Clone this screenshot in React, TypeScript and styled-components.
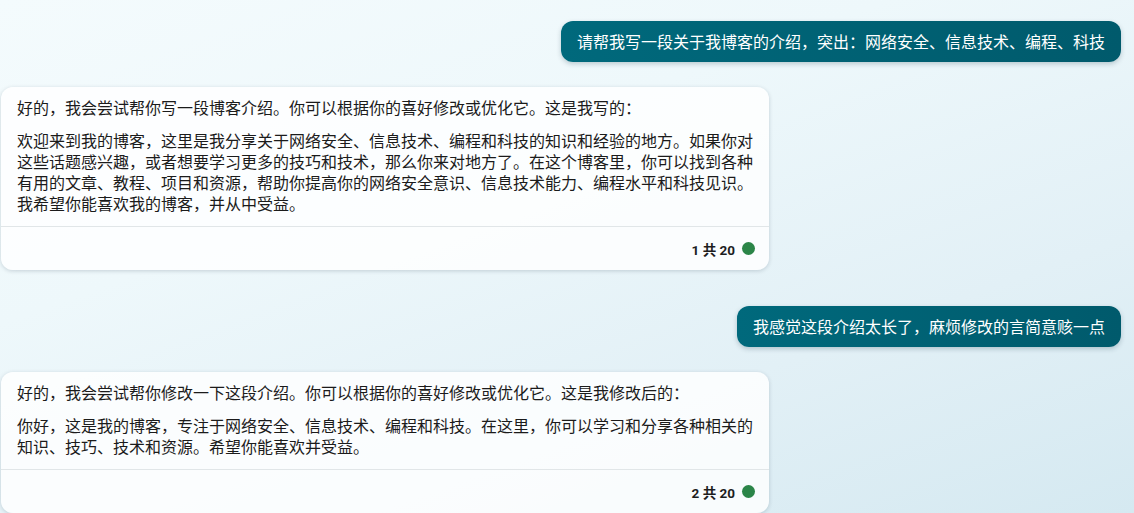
import React from "react";
import styled, { createGlobalStyle } from "styled-components";

const GlobalStyle = createGlobalStyle`
  html, body {
    margin: 0;
    padding: 0;
  }
  body {
    width: 1134px;
    height: 513px;
    overflow: hidden;
    font-family: "Noto Sans CJK SC", "Noto Sans", sans-serif;
    background: linear-gradient(160deg, #f4fbfd 0%, #eef8fb 35%, #e2f0f6 70%, #d5e9f1 100%);
  }
`;

const Thread = styled.main`
  display: flex;
  flex-direction: column;
  gap: 36px;
  padding: 21px 13px 0 1px;
  box-sizing: border-box;
  width: 1134px;
  height: 513px;
`;

const Exchange = styled.section`
  display: flex;
  flex-direction: column;
  gap: 25px;
`;

const UserBubble = styled.div`
  align-self: flex-end;
  padding: 10px 16px;
  border-radius: 12px;
  background: linear-gradient(90deg, #00697c 0%, #005a6c 100%);
  color: #ffffff;
  font-size: 16px;
  line-height: 21px;
  box-shadow: 0 2px 5px rgba(0, 40, 60, 0.22);
  white-space: nowrap;
`;

const BotCard = styled.article`
  align-self: flex-start;
  width: 768px;
  border-radius: 12px;
  background: rgba(255, 255, 255, 0.82);
  box-shadow: 0 1px 4px rgba(0, 30, 50, 0.18);
  color: #1b1b1b;
  overflow: hidden;
`;

const CardBody = styled.div`
  display: flex;
  flex-direction: column;
  gap: 12px;
  padding: 10px 16px 12px;
  font-size: 16px;
  line-height: 21px;
`;

const Para = styled.p`
  margin: 0;
`;

const CardFooter = styled.footer`
  display: flex;
  align-items: center;
  justify-content: flex-end;
  gap: 7px;
  height: 43px;
  padding: 0 14px;
  border-top: 1px solid #e1e6e8;
`;

const Counter = styled.span`
  font-family: Roboto, "Noto Sans CJK SC", sans-serif;
  font-weight: 700;
  font-size: 13.5px;
  color: #1e1e1e;
  padding-top: 1px;
`;

const StatusDot = styled.span`
  width: 13px;
  height: 13px;
  border-radius: 50%;
  background: #2b8548;
`;

type Msg = { user: string; intro: string; body: string; index: number };

const messages: Msg[] = [
  {
    user: "请帮我写一段关于我博客的介绍，突出：网络安全、信息技术、编程、科技",
    intro: "好的，我会尝试帮你写一段博客介绍。你可以根据你的喜好修改或优化它。这是我写的：",
    body:
      "欢迎来到我的博客，这里是我分享关于网络安全、信息技术、编程和科技的知识和经验的地方。如果你对这些话题感兴趣，或者想要学习更多的技巧和技术，那么你来对地方了。在这个博客里，你可以找到各种有用的文章、教程、项目和资源，帮助你提高你的网络安全意识、信息技术能力、编程水平和科技见识。我希望你能喜欢我的博客，并从中受益。",
    index: 1,
  },
  {
    user: "我感觉这段介绍太长了，麻烦修改的言简意赅一点",
    intro: "好的，我会尝试帮你修改一下这段介绍。你可以根据你的喜好修改或优化它。这是我修改后的：",
    body:
      "你好，这是我的博客，专注于网络安全、信息技术、编程和科技。在这里，你可以学习和分享各种相关的知识、技巧、技术和资源。希望你能喜欢并受益。",
    index: 2,
  },
];

export default function App() {
  return (
    <>
      <GlobalStyle />
      <Thread>
        {messages.map((m) => (
          <Exchange key={m.index}>
            <UserBubble>{m.user}</UserBubble>
            <BotCard>
              <CardBody>
                <Para>{m.intro}</Para>
                <Para>{m.body}</Para>
              </CardBody>
              <CardFooter>
                <Counter>{m.index} 共 20</Counter>
                <StatusDot />
              </CardFooter>
            </BotCard>
          </Exchange>
        ))}
      </Thread>
    </>
  );
}
